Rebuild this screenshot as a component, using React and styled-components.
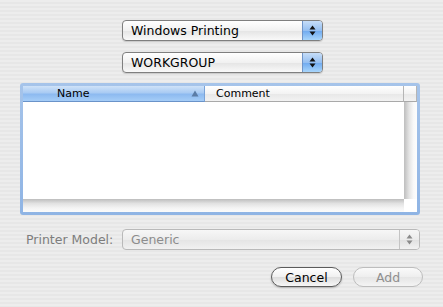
import React from 'react';
import styled, { createGlobalStyle } from 'styled-components';

const GlobalStyle = createGlobalStyle`
    html, body {
        margin: 0;
        padding: 0;
    }
    body {
        font-family: "DejaVu Sans", "Liberation Sans", sans-serif;
        font-size: 12.5px;
        color: #000;
    }
`;

// Janela com o fundo listrado do Aqua
const Sheet = styled.div`
    width: 443px;
    height: 307px;
    box-sizing: border-box;
    padding: 20px 0 0 20px;
    display: flex;
    flex-direction: column;
    background: repeating-linear-gradient(
        to bottom,
        #ededed 0px,
        #ededed 2px,
        #e7e7e7 2px,
        #e7e7e7 4px
    );
    overflow: hidden;
`;

const CenterRow = styled.div`
    display: flex;
    justify-content: flex-start;
    padding-left: 102px;
    margin-bottom: ${(p) => p.$gap || 0}px;
`;

const Popup = styled.div`
    width: ${(p) => p.$width}px;
    height: 21px;
    box-sizing: border-box;
    display: flex;
    align-items: stretch;
    border: 1px solid ${(p) => (p.$disabled ? '#b9b9b9' : '#7f7f7f')};
    border-radius: 4px;
    background: ${(p) =>
        p.$disabled
            ? 'linear-gradient(#f7f7f7, #ececec 50%, #e4e4e4 51%, #f1f1f1)'
            : 'linear-gradient(#ffffff, #f1f1f1 50%, #e4e4e4 51%, #f9f9f9)'};
    box-shadow: ${(p) => (p.$disabled ? 'none' : '0 1px 1px rgba(0,0,0,0.15)')};
    overflow: hidden;
`;

const PopupText = styled.span`
    flex: 1;
    display: flex;
    align-items: center;
    padding-left: 8px;
    font-size: 12.5px;
    color: ${(p) => (p.$disabled ? '#8c8c8c' : '#000')};
    white-space: nowrap;
`;

const Stepper = styled.span`
    width: 19px;
    display: flex;
    align-items: center;
    justify-content: center;
    border-left: 1px solid ${(p) => (p.$disabled ? '#c4c4c4' : '#6f94c8')};
    background: ${(p) =>
        p.$disabled
            ? 'linear-gradient(#f6f6f6, #ebebeb 50%, #e0e0e0 51%, #f2f2f2)'
            : 'linear-gradient(#c6ddf8, #95bff1 50%, #6ea9ef 51%, #a8d5fb)'};
`;

const Arrows = ({ color }) => (
    <svg width="7" height="11" viewBox="0 0 7 11">
        <polygon points="3.5,0.5 6.5,4.5 0.5,4.5" fill={color} />
        <polygon points="0.5,6.5 6.5,6.5 3.5,10.5" fill={color} />
    </svg>
);

const PopupButton = ({ label, width, disabled }) => (
    <Popup $width={width} $disabled={disabled}>
        <PopupText $disabled={disabled}>{label}</PopupText>
        <Stepper $disabled={disabled}>
            <Arrows color={disabled ? '#8a8a8a' : '#111'} />
        </Stepper>
    </Popup>
);

// Tabela com anel de foco
const FocusRing = styled.div`
    width: 400px;
    box-sizing: border-box;
    margin-top: 10px;
    padding: 3px;
    border-radius: 3px;
    background: linear-gradient(#a6c4ea, #8fb4e4);
`;

const Table = styled.div`
    display: grid;
    grid-template-columns: 182px 199px 13px;
    grid-template-rows: 16px 97px 13px;
    background: #fff;
`;

const HeaderCell = styled.div`
    display: flex;
    align-items: center;
    box-sizing: border-box;
    padding-left: ${(p) => p.$pad || 0}px;
    font-size: 11px;
    border-bottom: 1px solid ${(p) => (p.$active ? '#6a93c9' : '#a9a9a9')};
    border-right: 1px solid ${(p) => (p.$active ? '#7aa3d8' : '#b5b5b5')};
    background: ${(p) =>
        p.$active
            ? 'linear-gradient(#cfe2f8, #a9cbf3 45%, #8dbaf0 55%, #a5cdf7)'
            : 'linear-gradient(#ffffff, #f3f3f3 50%, #e8e8e8 55%, #f2f2f2)'};
    &:last-child {
        border-right: none;
    }
`;

const HeaderLabel = styled.span`
    flex: 1;
`;

const SortMark = styled.span`
    margin-right: 5px;
    display: flex;
`;

const Body = styled.div`
    grid-column: 1 / 3;
    background: #fff;
`;

const VTrack = styled.div`
    border-left: 1px solid #c2c2c2;
    background: linear-gradient(to right, #c4c4c4, #e4e4e4 35%, #f8f8f8 70%, #fdfdfd);
`;

const HTrack = styled.div`
    grid-column: 1 / 3;
    background: linear-gradient(#bdbdbd, #e2e2e2 35%, #f4f4f4 70%, #fbfbfb);
`;

const Corner = styled.div`
    background: #fff;
`;

const ModelRow = styled.div`
    display: flex;
    align-items: center;
    margin-top: 14px;
    gap: 10px;
    padding-left: 6px;
`;

const FieldLabel = styled.span`
    width: 86px;
    color: #7d7d7d;
    white-space: nowrap;
`;

const ButtonRow = styled.div`
    display: flex;
    justify-content: flex-end;
    gap: 11px;
    margin-top: 17px;
    width: 403px;
`;

const PushButton = styled.div`
    width: ${(p) => p.$width}px;
    height: 20px;
    box-sizing: border-box;
    display: flex;
    align-items: center;
    justify-content: center;
    border-radius: 10px;
    border: 1px solid ${(p) => (p.$disabled ? '#bdbdbd' : '#5c5c5c')};
    background: ${(p) =>
        p.$disabled
            ? 'linear-gradient(#fafafa, #eeeeee 50%, #e5e5e5 51%, #f4f4f4)'
            : 'linear-gradient(#ffffff, #f0f0f0 50%, #dddddd 51%, #f7f7f7)'};
    box-shadow: ${(p) => (p.$disabled ? 'none' : '0 1px 2px rgba(0,0,0,0.25)')};
    color: ${(p) => (p.$disabled ? '#8f8f8f' : '#000')};
    font-size: 12.5px;
`;

const App = () => {
    return (
        <>
            <GlobalStyle />
            <Sheet>
                <CenterRow $gap={11}>
                    <PopupButton label="Windows Printing" width={201} />
                </CenterRow>
                <CenterRow>
                    <PopupButton label="WORKGROUP" width={201} />
                </CenterRow>
                <FocusRing>
                    <Table>
                        <HeaderCell $active $pad={34}>
                            <HeaderLabel>Name</HeaderLabel>
                            <SortMark>
                                <svg width="8" height="7" viewBox="0 0 8 7">
                                    <polygon points="4,0.5 7.5,6.5 0.5,6.5" fill="#5b7ca6" />
                                </svg>
                            </SortMark>
                        </HeaderCell>
                        <HeaderCell $pad={11}>
                            <HeaderLabel>Comment</HeaderLabel>
                        </HeaderCell>
                        <HeaderCell />
                        <Body />
                        <VTrack />
                        <HTrack />
                        <Corner />
                    </Table>
                </FocusRing>
                <ModelRow>
                    <FieldLabel>Printer Model:</FieldLabel>
                    <PopupButton label="Generic" width={298} disabled />
                </ModelRow>
                <ButtonRow>
                    <PushButton $width={71}>Cancel</PushButton>
                    <PushButton $width={70} $disabled>Add</PushButton>
                </ButtonRow>
            </Sheet>
        </>
    );
};

export default App;
